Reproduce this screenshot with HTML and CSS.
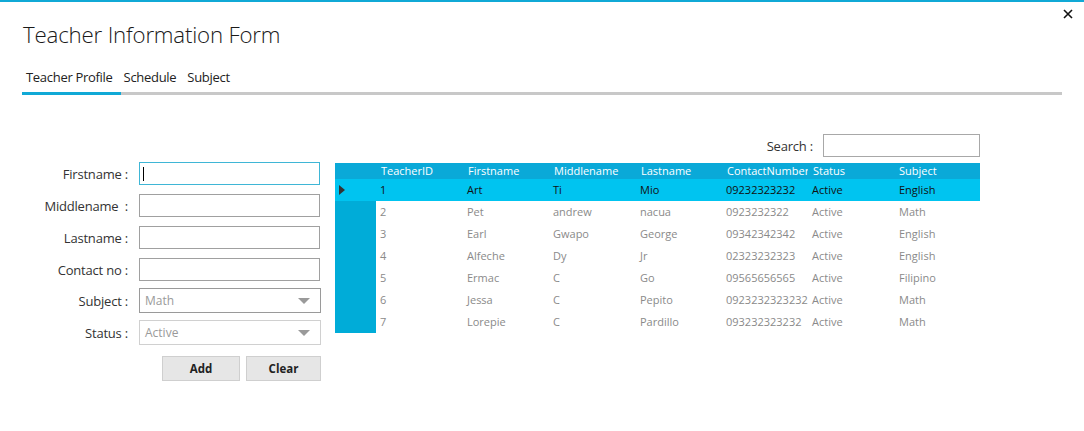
FILE: index.html
```html
<!DOCTYPE html>
<html>
<head>
<meta charset="utf-8">
<title>Teacher Information Form</title>
<link rel="stylesheet" href="styles.css">
</head>
<body>
<div class="window">
  <button class="close" aria-label="Close">
    <svg width="10" height="10" viewBox="0 0 10 10"><path d="M1 1L9 9M9 1L1 9" stroke="#111" stroke-width="1.6"/></svg>
  </button>
  <h1 class="title">Teacher Information Form</h1>
  <div class="tabs">
    <span class="tab active">Teacher Profile</span>
    <span class="tab">Schedule</span>
    <span class="tab">Subject</span>
  </div>
  <div class="content">
    <div class="form">
      <div class="field"><label>Firstname :</label><div class="input focus"><span class="caret"></span></div></div>
      <div class="field"><label>Middlename&nbsp; :</label><div class="input"></div></div>
      <div class="field"><label>Lastname :</label><div class="input"></div></div>
      <div class="field"><label>Contact no :</label><div class="input"></div></div>
      <div class="field combo-field"><label>Subject :</label><div class="combo"><span>Math</span><i class="arrow"></i></div></div>
      <div class="field combo-field"><label>Status :</label><div class="combo light"><span>Active</span><i class="arrow"></i></div></div>
      <div class="buttons"><button class="btn">Add</button><button class="btn">Clear</button></div>
    </div>
    <div class="right">
      <div class="search"><label>Search :</label><div class="input search-input"></div></div>
      <div class="grid">
        <div class="row head">
          <div class="rh"></div><div>TeacherID</div><div>Firstname</div><div>Middlename</div><div>Lastname</div><div class="clip">ContactNumber</div><div>Status</div><div class="subj">Subject</div>
        </div>
        <div class="row sel">
          <div class="rh"><i class="ptr"></i></div><div>1</div><div>Art</div><div>Ti</div><div>Mio</div><div>09232323232</div><div>Active</div><div>English</div>
        </div>
        <div class="row">
          <div class="rh"></div><div>2</div><div>Pet</div><div>andrew</div><div>nacua</div><div>0923232322</div><div>Active</div><div>Math</div>
        </div>
        <div class="row">
          <div class="rh"></div><div>3</div><div>Earl</div><div>Gwapo</div><div>George</div><div>09342342342</div><div>Active</div><div>English</div>
        </div>
        <div class="row">
          <div class="rh"></div><div>4</div><div>Alfeche</div><div>Dy</div><div>Jr</div><div>02323232323</div><div>Active</div><div>English</div>
        </div>
        <div class="row">
          <div class="rh"></div><div>5</div><div>Ermac</div><div>C</div><div>Go</div><div>09565656565</div><div>Active</div><div>Filipino</div>
        </div>
        <div class="row">
          <div class="rh"></div><div>6</div><div>Jessa</div><div>C</div><div>Pepito</div><div>0923232323232</div><div>Active</div><div>Math</div>
        </div>
        <div class="row">
          <div class="rh"></div><div>7</div><div>Lorepie</div><div>C</div><div>Pardillo</div><div>093232323232</div><div>Active</div><div>Math</div>
        </div>
      </div>
    </div>
  </div>
</div>
</body>
</html>
```

FILE: styles.css
```css
* { box-sizing: border-box; }
html, body { margin: 0; padding: 0; background: #fff; }
body {
  font-family: "Open Sans", "Noto Sans", sans-serif;
  color: #333;
  width: 1084px;
  height: 431px;
  overflow: hidden;
}
.window {
  position: relative;
  height: 431px;
  border-top: 2px solid #10a9d6;
}
.close {
  position: absolute;
  top: 6px;
  right: 10px;
  border: 0;
  background: transparent;
  padding: 0;
  width: 12px;
  height: 12px;
  display: flex;
  align-items: center;
  justify-content: center;
}
.title {
  margin: 0;
  padding: 17px 0 0 23px;
  font-size: 22.3px;
  font-weight: 300;
  line-height: 32px;
  color: #1a1a1a;
  letter-spacing: -0.2px;
}
.tabs {
  display: flex;
  margin: 17px 22px 0 22px;
  width: 1040px;
  border-bottom: 3px solid #c8c8c8;
}
.tab {
  font-size: 13px;
  line-height: 18px;
  padding: 0 4px 6px 4px;
  margin-bottom: -3px;
  border-bottom: 3px solid transparent;
  color: #222;
  letter-spacing: -0.3px;
}
.tab + .tab { padding-left: 3px; padding-right: 8px; }
.tab.active { border-bottom-color: #10a9d6; padding-right: 8px; }

.content {
  display: flex;
  margin-top: 39px;
}
.form {
  display: flex;
  flex-direction: column;
  padding-top: 28px;
  width: 335px;
}
.field {
  display: flex;
  align-items: center;
  height: 23px;
  margin-bottom: 9px;
}
.field label {
  width: 128px;
  text-align: right;
  font-size: 13px;
  color: #333;
  margin-right: 11px;
  letter-spacing: -0.2px;
}
.input {
  width: 181px;
  height: 23px;
  border: 1px solid #a0a0a0;
  background: #fff;
  position: relative;
}
.input.focus { border-color: #3fb6d6; }
.caret {
  position: absolute;
  left: 3px;
  top: 4px;
  width: 1px;
  height: 14px;
  background: #000;
}
.combo-field { height: 25px; margin-bottom: 7px; }
.field:nth-child(4) { margin-bottom: 7px; }
.combo {
  width: 182px;
  height: 25px;
  border: 1px solid #9a9a9a;
  display: flex;
  align-items: center;
  justify-content: space-between;
  padding: 0 10px 0 5px;
  font-size: 12px;
  color: #9a9a9a;
}
.combo.light { border-color: #d0d0d0; }
.arrow {
  width: 0;
  height: 0;
  border-left: 6px solid transparent;
  border-right: 6px solid transparent;
  border-top: 6px solid #9a9a9a;
}
.buttons {
  display: flex;
  gap: 6px;
  margin-left: 162px;
  margin-top: 4px;
}
.btn {
  height: 25px;
  width: 78px;
  border: 1px solid #cfcfcf;
  background: #e6e6e6;
  font-family: "Open Sans", "Noto Sans", sans-serif;
  font-weight: bold;
  font-size: 11.5px;
  color: #222;
  padding: 0;
}
.btn + .btn { width: 75px; }

.right {
  display: flex;
  flex-direction: column;
  width: 645px;
}
.search {
  display: flex;
  justify-content: flex-end;
  align-items: center;
  height: 23px;
  margin-bottom: 6px;
}
.search label {
  font-size: 13px;
  color: #333;
  margin-right: 10px;
  letter-spacing: -0.2px;
}
.search-input { width: 157px; border-color: #a8a8a8; }

.grid {
  font-size: 11px;
  width: 645px;
}
.row {
  display: grid;
  grid-template-columns: 41px 87px 86px 87px 86px 86px 87px 85px;
  height: 22px;
  align-items: center;
  color: #8a8a8a;
}
.row > div {
  padding-left: 4px;
  white-space: nowrap;
  height: 100%;
  line-height: 22px;
}
.row .rh { background: #00acd8; padding: 0; position: relative; }
.row.head {
  height: 16px;
  background: #0aa9d8;
  color: #fff;
}
.row.head > div { line-height: 16px; padding-left: 5px; overflow: hidden; }
.row.head .rh { background: #0aa9d8; }
.row.head .subj { padding-left: 4px; }
.row.sel { background: #00c4f0; color: #111; }
.row.sel .rh { background: #00c4f0; }
.ptr {
  position: absolute;
  left: 4px;
  top: 6px;
  width: 0;
  height: 0;
  border-top: 5px solid transparent;
  border-bottom: 5px solid transparent;
  border-left: 6px solid #333;
}
```
